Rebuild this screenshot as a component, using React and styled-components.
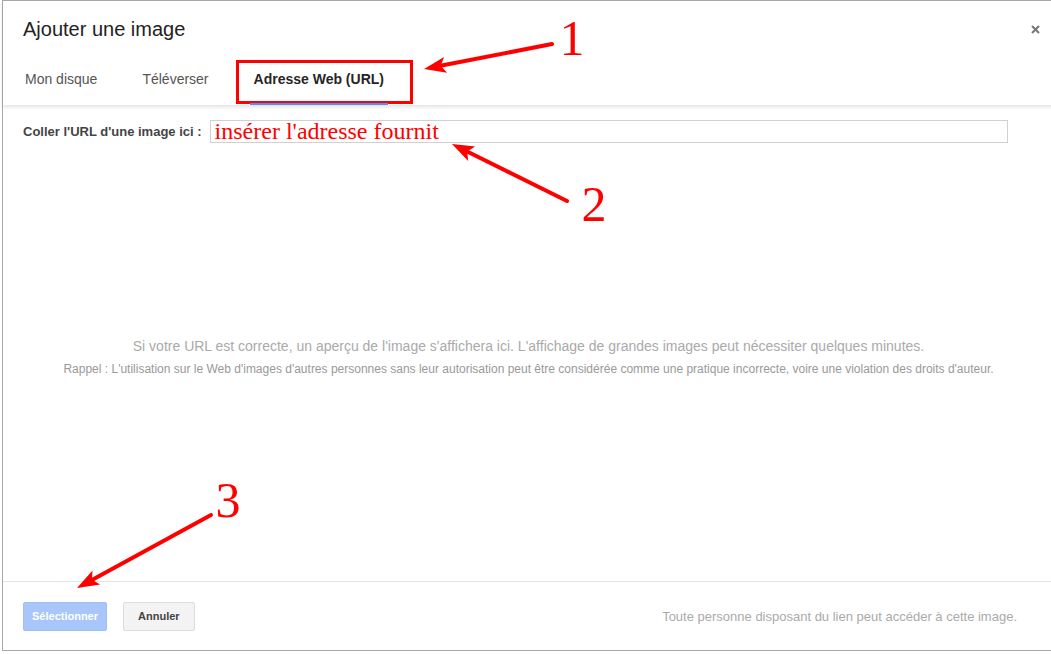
import React from "react";
import styled, { createGlobalStyle } from "styled-components";

const GlobalStyle = createGlobalStyle`
  html, body {
    margin: 0;
    padding: 0;
    background: #fff;
    overflow: hidden;
  }
  body {
    font-family: "Liberation Sans", Arial, sans-serif;
  }
`;

const Page = styled.div`
  position: relative;
  width: 1051px;
  height: 654px;
  padding-left: 2px;
  box-sizing: border-box;
  overflow: hidden;
`;

const Dialog = styled.div`
  width: 1052px;
  height: 651px;
  box-sizing: border-box;
  border: 1px solid #a9a9a9;
  border-right: none;
  background: #fff;
  display: flex;
  flex-direction: column;
`;

const Header = styled.div`
  position: relative;
  padding: 16px 0 0 20px;
  box-shadow: 0 2px 4px rgba(0, 0, 0, 0.12);
  z-index: 1;
`;

const Title = styled.h1`
  margin: 0;
  font-size: 20px;
  line-height: 24px;
  font-weight: normal;
  color: #222;
`;

const CloseButton = styled.button`
  position: absolute;
  top: 23px;
  right: 14px;
  width: 10px;
  height: 10px;
  padding: 0;
  border: none;
  background: none;
  display: flex;
  align-items: center;
  justify-content: center;
`;

const Tabs = styled.div`
  display: flex;
  gap: 37px;
  margin: 30px 0 0 -2px;
`;

const Tab = styled.div`
  padding: 0 4px 16px;
  font-size: 14px;
  line-height: 16px;
  color: ${(p) => (p.$active ? "#262626" : "#555")};
  font-weight: ${(p) => (p.$active ? "bold" : "normal")};
  border-bottom: 2px solid ${(p) => (p.$active ? "#4d90fe" : "transparent")};
`;

const Body = styled.div`
  flex: 1;
  padding: 15px 0 0 20px;
  display: flex;
  flex-direction: column;
`;

const UrlRow = styled.div`
  display: flex;
  align-items: center;
  gap: 8px;
`;

const Label = styled.label`
  font-size: 13px;
  font-weight: bold;
  color: #444;
  white-space: nowrap;
`;

const UrlInput = styled.div`
  width: 798px;
  height: 23px;
  box-sizing: border-box;
  border: 1px solid #d0d0d0;
  padding-left: 4px;
  font-family: "Liberation Serif", "Times New Roman", serif;
  font-size: 24px;
  line-height: 20px;
  color: #ff0000;
  white-space: nowrap;
  overflow: visible;
`;

const Preview = styled.div`
  margin: 194px 0 0 -20px;
  text-align: center;
  display: flex;
  flex-direction: column;
  gap: 7px;
`;

const PreviewMain = styled.p`
  margin: 0;
  font-size: 14px;
  line-height: 18px;
  color: #aaa;
`;

const PreviewNote = styled.p`
  margin: 0;
  font-size: 12px;
  line-height: 15px;
  color: #999;
`;

const Footer = styled.div`
  height: 69px;
  box-sizing: border-box;
  border-top: 1px solid #e5e5e5;
  padding: 0 37px 0 20px;
  display: flex;
  align-items: center;
  gap: 16px;
`;

const Button = styled.button`
  height: 29px;
  padding: 0 ${(p) => (p.$primary ? "8px" : "14px")};
  border-radius: 2px;
  font-family: inherit;
  font-size: 11px;
  font-weight: bold;
  border: 1px solid ${(p) => (p.$primary ? "#9fc0f6" : "#dcdcdc")};
  background: ${(p) => (p.$primary ? "#a8c6fa" : "#f3f3f3")};
  color: ${(p) => (p.$primary ? "#fff" : "#444")};
`;

const FooterNote = styled.span`
  margin-left: auto;
  font-size: 13px;
  color: #aaa;
`;

const Annotations = styled.svg`
  position: absolute;
  left: 0;
  top: 0;
  pointer-events: none;
`;

const arrows = [
  { from: [552, 44], to: [424, 69] },
  { from: [567, 201], to: [452, 144] },
  { from: [211, 515], to: [77, 588] },
];

const labels = [
  { text: "1", x: 572, y: 55 },
  { text: "2", x: 594, y: 221 },
  { text: "3", x: 228, y: 517 },
];

function Arrow({ from, to }) {
  const dx = to[0] - from[0];
  const dy = to[1] - from[1];
  const len = Math.hypot(dx, dy);
  const ux = dx / len;
  const uy = dy / len;
  const bx = to[0] - ux * 22;
  const by = to[1] - uy * 22;
  const px = -uy * 8;
  const py = ux * 8;
  return (
    <g>
      <line x1={from[0]} y1={from[1]} x2={bx + ux * 4} y2={by + uy * 4} stroke="#f00" strokeWidth="4" strokeLinecap="round" />
      <polygon points={`${to[0]},${to[1]} ${bx + px},${by + py} ${bx + ux * 5},${by + uy * 5} ${bx - px},${by - py}`} fill="#f00" />
    </g>
  );
}

export default function App() {
  return (
    <>
      <GlobalStyle />
      <Page>
        <Dialog>
          <Header>
            <Title>Ajouter une image</Title>
            <CloseButton aria-label="Fermer">
              <svg width="9" height="9" viewBox="0 0 9 9">
                <path d="M1 1L8 8M8 1L1 8" stroke="#777" strokeWidth="2" />
              </svg>
            </CloseButton>
            <Tabs>
              <Tab>Mon disque</Tab>
              <Tab>Téléverser</Tab>
              <Tab $active>Adresse Web (URL)</Tab>
            </Tabs>
          </Header>
          <Body>
            <UrlRow>
              <Label>Coller l'URL d'une image ici :</Label>
              <UrlInput>insérer l'adresse fournit</UrlInput>
            </UrlRow>
            <Preview>
              <PreviewMain>
                Si votre URL est correcte, un aperçu de l'image s'affichera ici. L'affichage de grandes images peut nécessiter quelques minutes.
              </PreviewMain>
              <PreviewNote>
                Rappel : L'utilisation sur le Web d'images d'autres personnes sans leur autorisation peut être considérée comme une pratique incorrecte, voire une violation des droits d'auteur.
              </PreviewNote>
            </Preview>
          </Body>
          <Footer>
            <Button $primary>Sélectionner</Button>
            <Button>Annuler</Button>
            <FooterNote>Toute personne disposant du lien peut accéder à cette image.</FooterNote>
          </Footer>
        </Dialog>
        <Annotations width="1051" height="654">
          <rect x="237.5" y="61.5" width="174" height="41" fill="none" stroke="#f00" strokeWidth="3" />
          {arrows.map((a, i) => (
            <Arrow key={i} {...a} />
          ))}
          {labels.map((l) => (
            <text
              key={l.text}
              x={l.x}
              y={l.y}
              textAnchor="middle"
              fontFamily="'Liberation Serif', 'Times New Roman', serif"
              fontSize="50"
              fill="#f00"
            >
              {l.text}
            </text>
          ))}
        </Annotations>
      </Page>
    </>
  );
}
